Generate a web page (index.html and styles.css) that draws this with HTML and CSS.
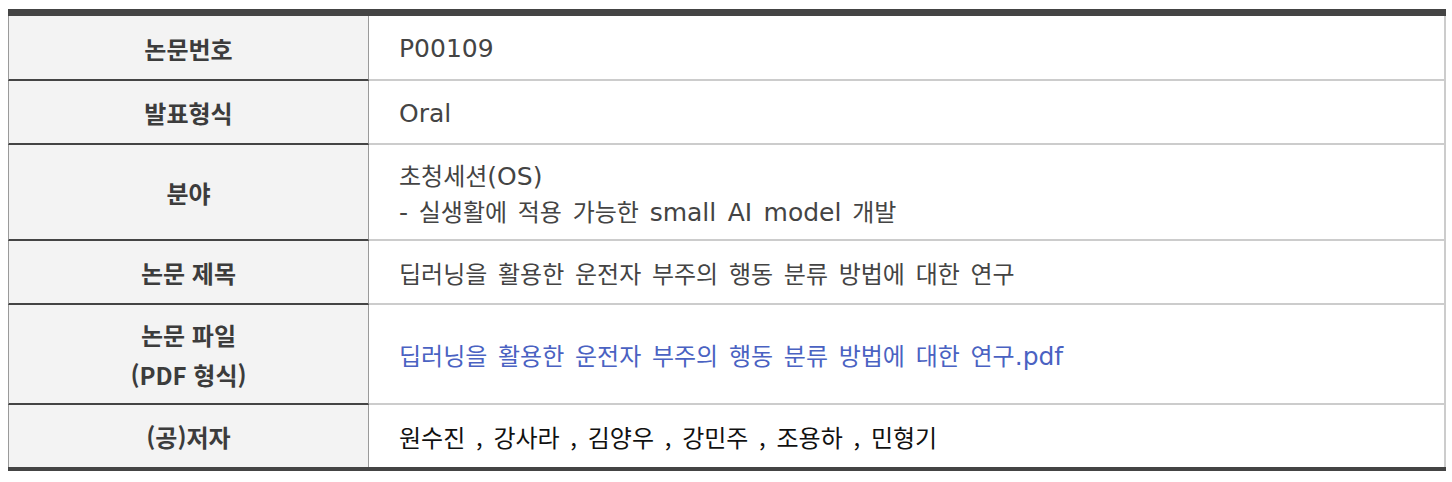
FILE: index.html
```html
<!DOCTYPE html>
<html lang="ko">
<head>
<meta charset="utf-8">
<title>논문 정보</title>
<link rel="stylesheet" href="styles.css">
</head>
<body>
<div class="info">
  <div class="label first">논문번호</div>
  <div class="value first"><span class="latin">P00109</span></div>

  <div class="label">발표형식</div>
  <div class="value"><span class="latin">Oral</span></div>

  <div class="label">분야</div>
  <div class="value">
    <div>초청세션<span class="latin">(OS)</span></div>
    <div><span class="latin">-</span> 실생활에 적용 가능한 <span class="latin">small AI model</span> 개발</div>
  </div>

  <div class="label">논문 제목</div>
  <div class="value">딥러닝을 활용한 운전자 부주의 행동 분류 방법에 대한 연구</div>

  <div class="label">논문 파일<br>(PDF 형식)</div>
  <div class="value"><a class="file-link" href="#">딥러닝을 활용한 운전자 부주의 행동 분류 방법에 대한 연구<span class="latin">.pdf</span></a></div>

  <div class="label last">(공)저자</div>
  <div class="value last authors">원수진 , 강사라 , 김양우 , 강민주 , 조용하 , 민형기</div>
</div>
</body>
</html>
```

FILE: styles.css
```css
* {
  box-sizing: border-box;
}

body {
  margin: 0;
  background: #ffffff;
  font-family: "Noto Sans CJK KR", "Noto Sans", sans-serif;
}

.info {
  margin: 9px 6px 0 8px;
  display: grid;
  grid-template-columns: 361px 1fr;
  border-top: 7px solid #444444;
  border-bottom: 4px solid #444444;
}

.label,
.value {
  min-height: 64px;
  display: flex;
  flex-direction: column;
  justify-content: center;
}

.label {
  padding: 10px 0 8px;
  align-items: center;
  text-align: center;
  background: #f3f3f3;
  border-left: 1px solid #9a9a9a;
  border-right: 1px solid #9a9a9a;
  border-bottom: 2px solid #444444;
  color: #3c3c3c;
  font-size: 24px;
  font-weight: 700;
  line-height: 40px;
}

.value {
  padding: 12px 0 10px 30px;
  align-items: flex-start;
  background: #ffffff;
  border-right: 2px solid #cccccc;
  border-bottom: 2px solid #cccccc;
  color: #444444;
  font-size: 24px;
  line-height: 36px;
  word-spacing: 4px;
}

.label.first,
.value.first {
  min-height: 65px;
}

.label.last,
.value.last {
  border-bottom: none;
  min-height: 62px;
}

.latin {
  font-family: "DejaVu Sans", "Noto Sans", sans-serif;
  font-size: 25px;
  line-height: 1;
  word-spacing: 3.5px;
}

.file-link {
  color: #4a62c2;
  text-decoration: none;
}

.authors {
  color: #111111;
  word-spacing: 4px;
}
```
